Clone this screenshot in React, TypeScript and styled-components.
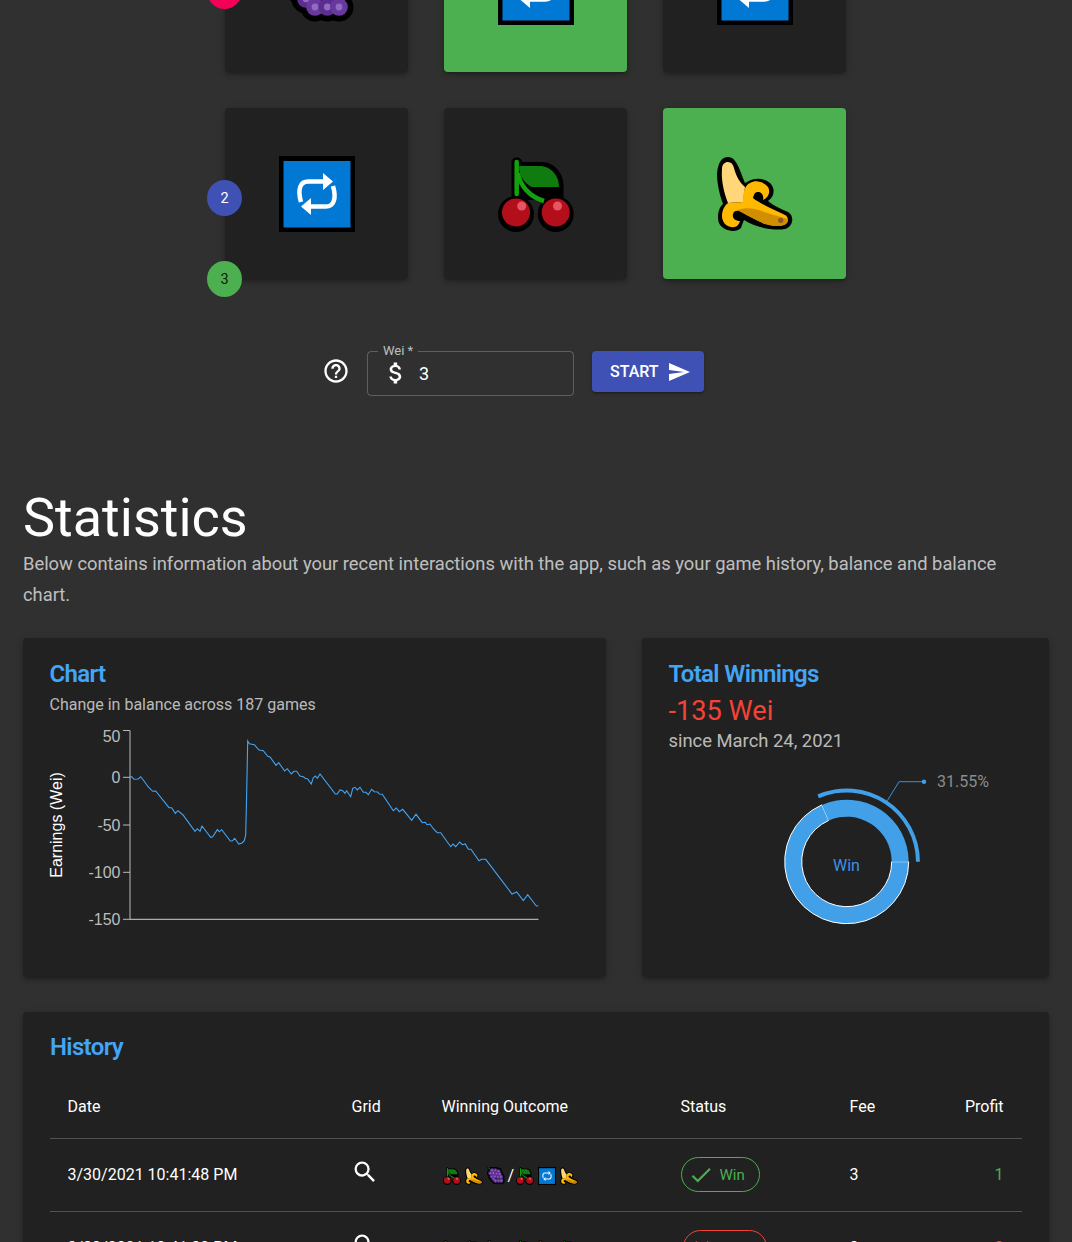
import React from "react";
import styled, { createGlobalStyle } from "styled-components";
import { MdHelpOutline, MdAttachMoney, MdSend, MdSearch, MdDone, MdClose } from "react-icons/md";

const Global = createGlobalStyle`
  html, body { margin: 0; padding: 0; background: #303030; }
  body { font-family: Roboto, "Liberation Sans", sans-serif; color: #fff; }
`;

const Page = styled.div`
  height: 1242px;
  overflow: hidden;
  background: #303030;
`;
const Scrolled = styled.main`
  margin-top: -99px;
  display: flex;
  flex-direction: column;
`;
const GameArea = styled.section`
  display: flex;
  justify-content: center;
  padding-right: 1px;
`;
const Board = styled.div`
  position: relative;
  display: grid;
  grid-template-columns: repeat(3, 183px);
  grid-auto-rows: 171px;
  gap: 36px;
`;
const Tile = styled.div<{ $win?: boolean }>`
  display: flex;
  align-items: center;
  justify-content: center;
  border-radius: 4px;
  background: ${(p) => (p.$win ? "#4caf50" : "#212121")};
  box-shadow: 0 3px 3px -2px rgba(0,0,0,.2), 0 3px 4px 0 rgba(0,0,0,.14), 0 1px 8px 0 rgba(0,0,0,.12);
`;
const Badge = styled.div<{ $bg: string; $fg: string; $top: number }>`
  position: absolute;
  left: -18px;
  top: ${(p) => p.$top}px;
  width: 35px;
  height: 36px;
  border-radius: 50%;
  display: flex;
  align-items: center;
  justify-content: center;
  font-size: 14.5px;
  background: ${(p) => p.$bg};
  color: ${(p) => p.$fg};
`;
const BetRow = styled.form`
  display: flex;
  align-items: flex-start;
  justify-content: center;
  padding-right: 44px;
  margin-top: 72px;
`;
const HelpIcon = styled(MdHelpOutline)`
  font-size: 28px;
  margin: 6px 17px 0 -2px;
  color: #fff;
`;
const Field = styled.fieldset`
  position: relative;
  box-sizing: border-box;
  width: 207px;
  height: 45px;
  margin: 0 18px 0 0;
  padding: 0 0 0 14px;
  border: 1px solid rgba(255,255,255,.23);
  border-radius: 4px;
  display: flex;
  align-items: center;
`;
const FieldLegend = styled.legend`
  position: absolute;
  left: 10px;
  top: -9px;
  padding: 0 5px;
  background: #303030;
  font-size: 13px;
  line-height: 16px;
  color: rgba(255,255,255,.7);
`;
const DollarIcon = styled(MdAttachMoney)`
  font-size: 28px;
  margin: -1px 9px 0 0;
  color: #fff;
  flex: none;
`;
const FieldValue = styled.span`
  font-size: 18px;
  color: #fff;
`;
const StartButton = styled.button`
  width: 112px;
  height: 41px;
  border: 0;
  border-radius: 4px;
  background: #3f51b5;
  color: #fff;
  font: 500 16px Roboto, sans-serif;
  display: flex;
  align-items: center;
  justify-content: flex-start;
  gap: 8px;
  padding: 0 0 0 18px;
  box-shadow: 0 3px 1px -2px rgba(0,0,0,.2), 0 2px 2px 0 rgba(0,0,0,.14), 0 1px 5px 0 rgba(0,0,0,.12);
`;
const SendIcon = styled(MdSend)`
  font-size: 24px;
`;
const Stats = styled.section`
  padding: 0 23px;
  margin-top: 91px;
`;
const Heading = styled.h2`
  margin: 0;
  font-size: 54px;
  font-weight: 400;
  line-height: 61px;
`;
const Lead = styled.p`
  margin: 0;
  max-width: 1000px;
  font-size: 18.35px;
  line-height: 31px;
  color: rgba(255,255,255,.7);
`;
const CardRow = styled.div`
  display: grid;
  grid-template-columns: 583px 407px;
  gap: 36px;
  margin-top: 28px;
`;
const Card = styled.article`
  box-sizing: border-box;
  background: #212121;
  border-radius: 4px;
  padding: 20px 27px 20px 26.5px;
  height: 339px;
  overflow: hidden;
  display: flex;
  flex-direction: column;
  box-shadow: 0 3px 3px -2px rgba(0,0,0,.2), 0 3px 4px 0 rgba(0,0,0,.14), 0 1px 8px 0 rgba(0,0,0,.12);
`;
const HistoryCard = styled(Card)`
  height: auto;
  margin-top: 35px;
  padding: 19px 27px 20px;
`;
const CardTitle = styled.h3`
  margin: 0;
  font-size: 24px;
  line-height: 32px;
  font-weight: 600;
  letter-spacing: -0.65px;
  color: #42a5f5;
`;
const CardSub = styled.p`
  margin: 3px 0 0;
  font-size: 16px;
  line-height: 24px;
  color: rgba(255,255,255,.7);
`;
const Amount = styled.div`
  font-size: 27.2px;
  line-height: 36px;
  margin-top: 3px;
  color: #f44336;
`;
const Since = styled.div`
  font-size: 18.4px;
  line-height: 26px;
  margin-top: -1px;
  color: rgba(255,255,255,.7);
`;
const ChartSvg = styled.svg`
  flex: none;
  margin: 3px 0 0 -19.5px;
  display: block;
`;
const DonutSvg = styled.svg`
  flex: none;
  margin: 6px 0 0 101.5px;
  display: block;
`;
const Table = styled.table`
  width: 972px;
  margin-top: 11px;
  border-collapse: collapse;
  table-layout: fixed;
  font-size: 16px;
`;
const Th = styled.th<{ $right?: boolean; $w: number }>`
  width: ${(p) => p.$w}px;
  height: 64px;
  padding: 2px 18.5px 0 17.5px;
  font-weight: 400;
  text-align: ${(p) => (p.$right ? "right" : "left")};
  border-bottom: 1px solid #515151;
  box-sizing: border-box;
`;
const Td = styled.td<{ $right?: boolean; $color?: string }>`
  height: 73px;
  padding: 0 18.5px 0 17.5px;
  text-align: ${(p) => (p.$right ? "right" : "left")};
  color: ${(p) => p.$color || "#fff"};
  border-bottom: 1px solid #515151;
  box-sizing: border-box;
  white-space: nowrap;
`;
const SearchIcon = styled(MdSearch)`
  display: block;
  font-size: 28px;
  margin: -6px 0 0 -1px;
`;
const Outcome = styled.div`
  display: flex;
  align-items: center;
  gap: 4px;
  margin: 2px 0 0 1px;
`;
const Slash = styled.span`
  font-size: 16px;
  width: 6px;
  margin: 0 -2px 0 -1px;
`;
const Chip = styled.div<{ $color: string; $inset: number }>`
  display: inline-flex;
  align-items: center;
  box-sizing: border-box;
  height: 35px;
  padding: 0 14px 0 6px;
  gap: 6px;
  border-radius: 18px;
  border: 1px solid ${(p) => p.$color};
  color: ${(p) => p.$color};
  font-size: 15px;
  margin-left: ${(p) => p.$inset}px;
`;
const ChipCheck = styled(MdDone)`
  font-size: 26px;
`;
const ChipCross = styled(MdClose)`
  font-size: 24px;
`;

function CherryIcon({ size = 76 }: { size?: number }) {
  return (
    <svg width={size} height={size} viewBox="0 0 76 76">
      <path d="M13.5 6C13.5 0 24 0 24 6H44C56 6 65 17 65.5 28V44H13.5Z" fill="#000" />
      <circle cx="18" cy="58" r="18" fill="#000" />
      <circle cx="57.7" cy="58" r="18" fill="#000" />
      <path d="M21 10H42C52 10 61 19 61 31H34C27 28 21 20 21 10Z" fill="#107c10" />
      <path d="M18.7 6V38" stroke="#13a10e" strokeWidth="4.5" strokeLinecap="round" fill="none" />
      <path d="M20 17C22 30 32 41 46 45" stroke="#13a10e" strokeWidth="4.5" fill="none" />
      <circle cx="18" cy="56.5" r="14" fill="#b20f1a" />
      <circle cx="57.7" cy="56.5" r="14" fill="#b20f1a" />
      <circle cx="23.7" cy="50" r="4.5" fill="#e85562" />
      <circle cx="59.5" cy="50" r="4.5" fill="#e85562" />
    </svg>
  );
}

function BananaIcon({ size = 76 }: { size?: number }) {
  return (
    <svg width={size} height={size} viewBox="0 0 76 76">
      <path d="M11 1C5 1 1 6 0 18C0 28 3 40 6 48C1 52 0 62 2 67C5 74 18 78 24 72C25 69 26 66 27 64C38 71 55 75 68 73C76 71 78 60 71 56C64 53 57 50 51 45C57 41 59 33 53 27C46 21 36 22 28 27C25 20 22 10 18 5C16 2 14 1 11 1Z" fill="#000" />
      <path d="M5 13C5 8 8 6 11 6C14 6 16 8 17 12C19 20 23 27 28 31L26 46L11 47C7 37 4 24 5 13Z" fill="#ffd67a" />
      <path d="M26 46C26 36 28 29 33 27C39 23 47 26 51 31C54 36 51 42 46 44C47 40 45 36 41 36C38 36 37 38 36 42C42 47 55 53 68 59C72 61 72 67 67 69C60 71 52 69 48 68C39 64 31 60 25 56C21 54 17 54 16 58C15 62 18 65 23 65C22 69 19 72 14 71C9 70 5 66 5 60C5 54 8 49 11 47Z" fill="#ffb900" />
      <path d="M20 54C26 52 33 52 38 53C48 56 60 60 71 63C71 66 70 68 67 69C60 71 52 69 48 68C39 64 29 59 20 54Z" fill="#d18f00" />
      <circle cx="63.7" cy="64.3" r="2.6" fill="#8e562e" />
    </svg>
  );
}

function GrapesIcon({ size = 76 }: { size?: number }) {
  const grapes: [number, number][] = [
    [22, 14], [35, 14], [48, 18],
    [14, 26], [27, 26], [40, 28], [53, 30],
    [20, 40], [33, 40], [46, 42], [59, 42],
    [27, 50], [36, 58], [48.3, 58], [60, 58],
  ];
  return (
    <svg width={size} height={size} viewBox="0 0 76 76">
      <path d="M4 2L16 12" stroke="#000" strokeWidth="9" strokeLinecap="round" />
      {grapes.map(([x, y], i) => (
        <circle key={`o${i}`} cx={x} cy={y} r="14.5" fill="#000" />
      ))}
      <path d="M4 2L16 12" stroke="#107c10" strokeWidth="4" strokeLinecap="round" />
      {grapes.map(([x, y], i) => (
        <g key={i}>
          <circle cx={x} cy={y} r="8.8" fill={i % 2 ? "#5c2d91" : "#68389f"} />
          <circle cx={x} cy={y} r="3.4" fill="#8f6cc0" />
        </g>
      ))}
    </svg>
  );
}

function RepeatIcon({ size = 76 }: { size?: number }) {
  const half = (
    <>
      <path d="M44 25.5H29C22 25.5 18 32 22 46" stroke="#fff" strokeWidth="4.5" fill="none" />
      <path d="M44 17L54 25.5L44 34Z" fill="#fff" />
    </>
  );
  return (
    <svg width={size} height={size} viewBox="0 0 76 76">
      <rect width="76" height="76" fill="#000" />
      <rect x="4.5" y="5" width="67" height="66.5" fill="#0078d4" />
      {half}
      <g transform="rotate(180 38 38)">{half}</g>
    </svg>
  );
}

const z9: [number, number][] = [
  [30,157],[35,155],[42,163],[55,162],[62,155],[70,165],[85,186],[98,199],[107,198],[147,248],[155,248],[166,265],[174,257],[189,270],[225,319],[232,311],[240,319],[246,303],[272,337],[278,335],[292,314],[298,320],[305,314],[331,348],[337,348],[344,340],[356,357],[366,354],[373,347],[377,330],[380,200],[383,48],[388,56],[403,59],[417,75],[430,77],[443,94],[450,96],[468,121],[476,113],[494,138],[502,131],[514,147],[522,139],[530,139],[540,153],[550,155],[556,160],[563,162],[574,177],[580,158],[586,153],[592,160],[600,147],[646,207],
];
const z10: [number, number][] = [
  [22,102],[30,90],[38,92],[45,100],[50,92],[62,110],[68,85],[75,82],[82,90],[90,82],[100,97],[108,97],[115,104],[125,88],[133,95],[143,96],[148,102],[157,103],[190,152],[199,144],[208,155],[218,148],[245,181],[258,163],[277,188],[286,187],[291,194],[300,192],[310,206],[322,218],[332,218],[362,260],[369,252],[377,260],[389,246],[397,254],[406,252],[415,268],[423,268],[447,302],[455,298],[467,298],[546,402],[560,396],[580,422],[593,404],[619,438],[625,437],
];
const linePoints = [
  ...z9.map(([x, y]) => `${(120 + x / 3).toFixed(1)},${(725 + y / 3).toFixed(1)}`),
  ...z10.map(([x, y]) => `${(330 + x / 3).toFixed(1)},${(760 + y / 3).toFixed(1)}`),
].join(" ");

const ticks = [
  { y: 730.5, ty: 736, label: "50" },
  { y: 777.3, ty: 777.3, label: "0" },
  { y: 825, ty: 825, label: "-50" },
  { y: 872.3, ty: 872.3, label: "-100" },
  { y: 919.3, ty: 919.3, label: "-150" },
];

function EarningsChart() {
  return (
    <ChartSvg width="520" height="220" viewBox="30 720 520 220">
      <text transform="translate(62 825) rotate(-90)" textAnchor="middle" fontFamily="Liberation Sans, sans-serif" fontSize="16" fill="#fff">
        Earnings (Wei)
      </text>
      {ticks.map((t) => (
        <g key={t.label}>
          <line x1="123" x2="130" y1={t.y} y2={t.y} stroke="#bbb" />
          <text x="120.5" y={t.ty + 5.5} textAnchor="end" fontFamily="Liberation Sans, sans-serif" fontSize="16" fill="#bdbdbd">
            {t.label}
          </text>
        </g>
      ))}
      <line x1="130" x2="130" y1="730.5" y2="919.3" stroke="#bbb" />
      <line x1="130" x2="538.5" y1="919.3" y2="919.3" stroke="#d0d0d0" />
      <polyline points={linePoints} fill="none" stroke="#42a5f5" strokeWidth="1.1" />
    </ChartSvg>
  );
}

function polar(cx: number, cy: number, r: number, deg: number) {
  const a = (deg * Math.PI) / 180;
  return [cx + r * Math.cos(a), cy - r * Math.sin(a)];
}
function sector(cx: number, cy: number, r0: number, r1: number, a0: number, a1: number) {
  const [x1, y1] = polar(cx, cy, r1, a0);
  const [x2, y2] = polar(cx, cy, r1, a1);
  const [x3, y3] = polar(cx, cy, r0, a1);
  const [x4, y4] = polar(cx, cy, r0, a0);
  const large = a1 - a0 > 180 ? 1 : 0;
  return `M${x1} ${y1}A${r1} ${r1} 0 ${large} 0 ${x2} ${y2}L${x3} ${y3}A${r0} ${r0} 0 ${large} 1 ${x4} ${y4}Z`;
}

function Donut() {
  const cx = 846.7;
  const cy = 861.7;
  return (
    <DonutSvg width="240" height="180" viewBox="770 760 240 180">
      <path d={sector(cx, cy, 45, 62, 113.6, 360)} fill="#42a0e8" stroke="#fff" strokeWidth="1" />
      <path d={sector(cx, cy, 45, 62, 0, 113.6)} fill="#42a0e8" />
      <path d={sector(cx, cy, 69.3, 73.2, 0, 113.6)} fill="#42a0e8" />
      <polyline points="887.3,800.7 899,781.7 924,781.7" fill="none" stroke="#3f8fd2" />
      <circle cx="924" cy="781.7" r="2.2" fill="#42a0e8" />
      <text x="937" y="787" fontFamily="Roboto, sans-serif" fontSize="16" fill="#8c8c8c">31.55%</text>
      <text x="846.5" y="871" textAnchor="middle" fontFamily="Roboto, sans-serif" fontSize="16" fill="#3f8fe8">Win</text>
    </DonutSvg>
  );
}

export default function App() {
  return (
    <Page>
      <Global />
      <Scrolled>
        <GameArea>
          <Board>
            <Badge $bg="#f50057" $fg="#fff" $top={72}>1</Badge>
            <Badge $bg="#3f51b5" $fg="#fff" $top={279}>2</Badge>
            <Badge $bg="#4caf50" $fg="rgba(0,0,0,.87)" $top={360}>3</Badge>
            <Tile><GrapesIcon /></Tile>
            <Tile $win><RepeatIcon /></Tile>
            <Tile><RepeatIcon /></Tile>
            <Tile><RepeatIcon /></Tile>
            <Tile><CherryIcon /></Tile>
            <Tile $win><BananaIcon /></Tile>
          </Board>
        </GameArea>
        <BetRow>
          <HelpIcon />
          <Field>
            <FieldLegend>Wei *</FieldLegend>
            <DollarIcon />
            <FieldValue>3</FieldValue>
          </Field>
          <StartButton type="button">START<SendIcon /></StartButton>
        </BetRow>
        <Stats>
          <Heading>Statistics</Heading>
          <Lead>
            Below contains information about your recent interactions with the app, such as your game history, balance and balance chart.
          </Lead>
          <CardRow>
            <Card>
              <CardTitle>Chart</CardTitle>
              <CardSub>Change in balance across 187 games</CardSub>
              <EarningsChart />
            </Card>
            <Card>
              <CardTitle>Total Winnings</CardTitle>
              <Amount>-135 Wei</Amount>
              <Since>since March 24, 2021</Since>
              <Donut />
            </Card>
          </CardRow>
          <HistoryCard>
            <CardTitle>History</CardTitle>
            <Table>
              <thead>
                <tr>
                  <Th $w={284}>Date</Th>
                  <Th $w={90}>Grid</Th>
                  <Th $w={239}>Winning Outcome</Th>
                  <Th $w={169}>Status</Th>
                  <Th $w={103}>Fee</Th>
                  <Th $w={87} $right>Profit</Th>
                </tr>
              </thead>
              <tbody>
                <tr>
                  <Td>3/30/2021 10:41:48 PM</Td>
                  <Td><SearchIcon /></Td>
                  <Td>
                    <Outcome>
                      <CherryIcon size={18} /><BananaIcon size={18} /><GrapesIcon size={18} />
                      <Slash>/</Slash>
                      <CherryIcon size={18} /><RepeatIcon size={18} /><BananaIcon size={18} />
                    </Outcome>
                  </Td>
                  <Td><Chip $color="#4caf50" $inset={0}><ChipCheck />Win</Chip></Td>
                  <Td>3</Td>
                  <Td $right $color="#4caf50">1</Td>
                </tr>
                <tr>
                  <Td>3/30/2021 10:41:30 PM</Td>
                  <Td><SearchIcon /></Td>
                  <Td>
                    <Outcome>
                      <BananaIcon size={18} /><CherryIcon size={18} /><BananaIcon size={18} />
                      <Slash>/</Slash>
                      <CherryIcon size={18} /><BananaIcon size={18} /><CherryIcon size={18} />
                    </Outcome>
                  </Td>
                  <Td><Chip $color="#f44336" $inset={2}><ChipCross />Lose</Chip></Td>
                  <Td>3</Td>
                  <Td $right $color="#f44336">-3</Td>
                </tr>
              </tbody>
            </Table>
          </HistoryCard>
        </Stats>
      </Scrolled>
    </Page>
  );
}
